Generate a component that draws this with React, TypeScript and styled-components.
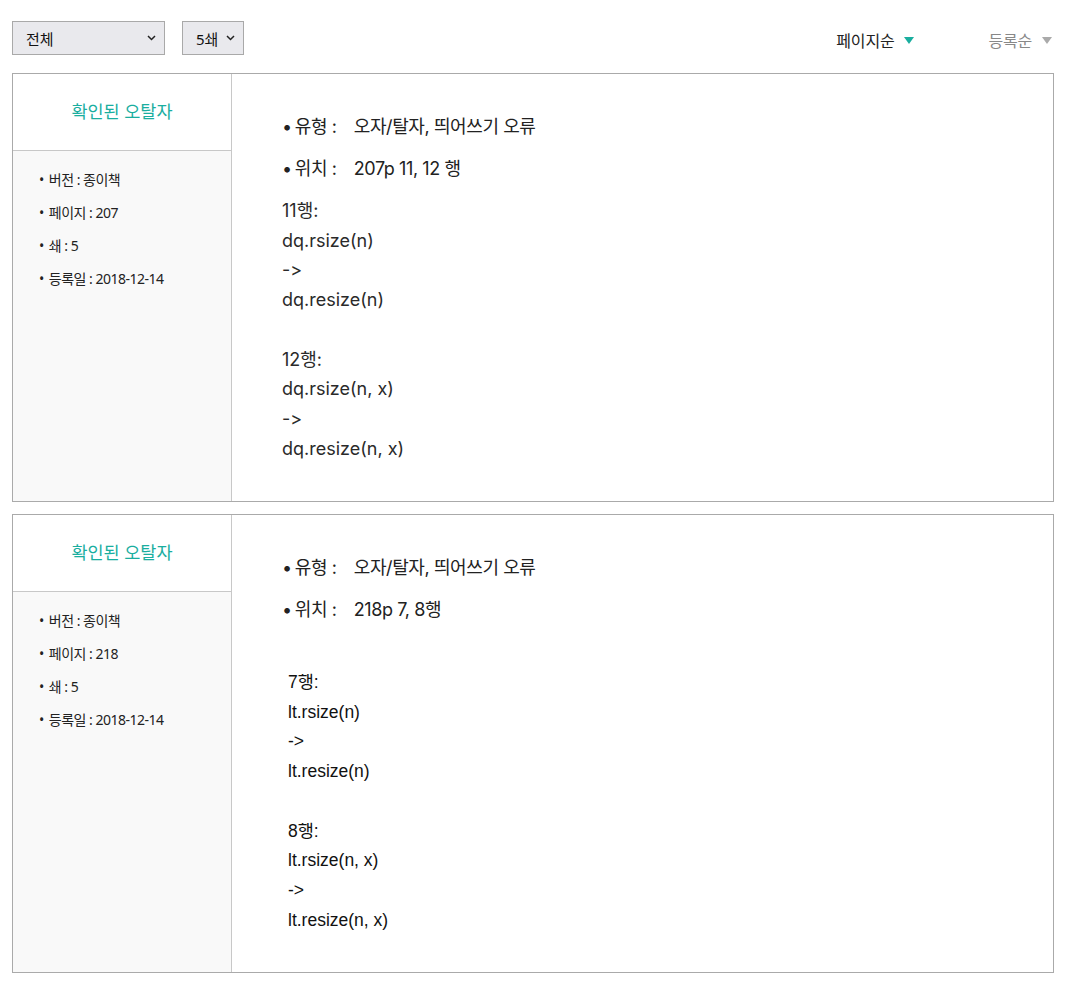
import React from "react";
import styled, { createGlobalStyle } from "styled-components";

const Global = createGlobalStyle`
  html, body { margin: 0; padding: 0; background: #fff; }
  body { font-family: "Noto Sans", "Noto Sans CJK KR", sans-serif; color: #222; }
`;

const Page = styled.div`
  padding: 21px 11px 10px 12px;
  display: flex;
  flex-direction: column;
  gap: 12px;
`;

const Toolbar = styled.div`
  display: flex;
  align-items: center;
  height: 34px;
  margin-bottom: 6px;
`;

const Select = styled.div<{ $w: number; $ml?: number }>`
  width: ${(p) => p.$w}px;
  margin-left: ${(p) => p.$ml ?? 0}px;
  height: 34px;
  box-sizing: border-box;
  border: 1px solid #a9a9a9;
  background: #e9e9ed;
  display: flex;
  align-items: center;
  justify-content: space-between;
  padding: 0 8px 0 13px;
  font-size: 15px;
  color: #111;
`;

const Chevron = () => (
  <svg width="9" height="6" viewBox="0 0 9 6">
    <path d="M1 1l3.5 3.5L8 1" fill="none" stroke="#222" strokeWidth="1.5" />
  </svg>
);

const Sorts = styled.div`
  margin-left: auto;
  display: flex;
  gap: 74px;
  padding-right: 2px;
  padding-top: 4px;
`;

const Sort = styled.div<{ $active?: boolean }>`
  display: flex;
  align-items: center;
  gap: 10px;
  font-size: 16px;
  letter-spacing: -0.2px;
  color: ${(p) => (p.$active ? "#222" : "#888")};
`;

const Tri = ({ color }: { color: string }) => (
  <svg width="10" height="7" viewBox="0 0 10 7">
    <path d="M0 0h10L5 7z" fill={color} />
  </svg>
);

const Card = styled.div<{ $h: number }>`
  display: grid;
  grid-template-columns: 219px 1fr;
  height: ${(p) => p.$h}px;
  box-sizing: border-box;
  border: 1px solid #aaa;
`;

const Side = styled.div`
  display: flex;
  flex-direction: column;
  border-right: 1px solid #c8c8c8;
  background: #f9f9f9;
`;

const SideHead = styled.div`
  height: 77px;
  box-sizing: border-box;
  background: #fff;
  border-bottom: 1px solid #c8c8c8;
  display: flex;
  align-items: center;
  justify-content: center;
  color: #1aae9f;
  font-size: 17.5px;
  padding-bottom: 3px;
`;

const SideList = styled.ul`
  list-style: none;
  margin: 0;
  padding: 18px 0 0 26px;
  display: flex;
  flex-direction: column;
  gap: 11px;
`;

const SideItem = styled.li`
  font-size: 14px;
  letter-spacing: -0.5px;
  line-height: 22px;
  color: #222;
  &::before {
    content: "•";
    margin-right: 5px;
  }
`;

const Main = styled.div`
  padding: 39px 0 0 50px;
  display: flex;
  flex-direction: column;
  font-family: Inter, "Noto Sans CJK KR", sans-serif;
  font-feature-settings: "calt" 0, "liga" 0;
  font-variant-ligatures: none;
`;

const InfoRow = styled.div`
  font-size: 18px;
  letter-spacing: -0.4px;
  line-height: 28px;
  margin-bottom: 14px;
  color: #222;
  display: flex;
  &::before {
    content: "•";
    margin-right: 3px;
  }
`;

const Label = styled.span`
  width: 59px;
`;

const Body = styled.div<{ $code?: boolean }>`
  font-family: ${(p) =>
    p.$code ? `"Liberation Sans", "Noto Sans CJK KR", sans-serif` : `Inter, "Noto Sans CJK KR", sans-serif`};
  font-size: ${(p) => (p.$code ? 17.5 : 18)}px;
  letter-spacing: 0;
  line-height: 29.7px;
  color: ${(p) => (p.$code ? "#111" : "#2a2a2a")};
  white-space: pre;
  margin-top: ${(p) => (p.$code ? 30 : -1)}px;
  padding-left: ${(p) => (p.$code ? 6 : 0)}px;
`;

type Entry = {
  page: string;
  loc: string;
  body: string;
  code?: boolean;
  h: number;
};

const entries: Entry[] = [
  {
    page: "207",
    loc: "207p 11, 12 행",
    body: "11행:\ndq.rsize(n)\n->\ndq.resize(n)\n\n12행:\ndq.rsize(n, x)\n->\ndq.resize(n, x)",
    h: 429,
  },
  {
    page: "218",
    loc: "218p 7, 8행",
    body: "7행:\nlt.rsize(n)\n->\nlt.resize(n)\n\n8행:\nlt.rsize(n, x)\n->\nlt.resize(n, x)",
    code: true,
    h: 459,
  },
];

export default function App() {
  return (
    <>
      <Global />
      <Page>
        <Toolbar>
          <Select $w={153}>
            전체 <Chevron />
          </Select>
          <Select $w={62} $ml={17}>
            5쇄 <Chevron />
          </Select>
          <Sorts>
            <Sort $active>
              페이지순 <Tri color="#1aae9f" />
            </Sort>
            <Sort>
              등록순 <Tri color="#aaa" />
            </Sort>
          </Sorts>
        </Toolbar>
        {entries.map((e) => (
          <Card key={e.page} $h={e.h}>
            <Side>
              <SideHead>확인된 오탈자</SideHead>
              <SideList>
                <SideItem>버전 : 종이책</SideItem>
                <SideItem>페이지 : {e.page}</SideItem>
                <SideItem>쇄 : 5</SideItem>
                <SideItem>등록일 : 2018-12-14</SideItem>
              </SideList>
            </Side>
            <Main>
              <InfoRow>
                <Label>유형 :</Label>오자/탈자, 띄어쓰기 오류
              </InfoRow>
              <InfoRow>
                <Label>위치 :</Label>
                {e.loc}
              </InfoRow>
              <Body $code={e.code}>{e.body}</Body>
            </Main>
          </Card>
        ))}
      </Page>
    </>
  );
}
